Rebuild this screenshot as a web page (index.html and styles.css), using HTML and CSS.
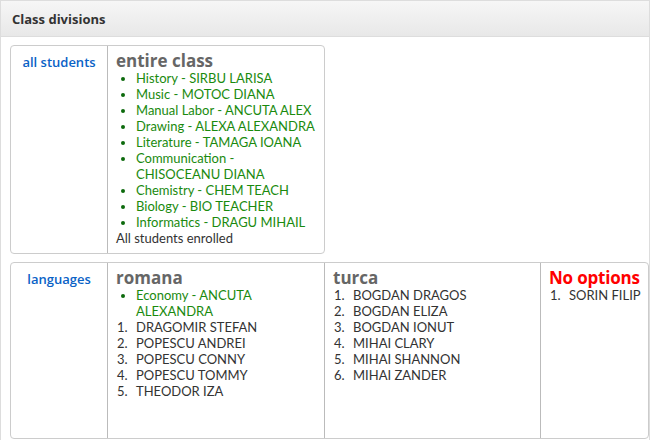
FILE: index.html
```html
<!DOCTYPE html>
<html lang="en">

<head>
    <meta charset="UTF-8">
    <title>Class divisions</title>
    <link rel="stylesheet" href="styles.css">
</head>

<body>
    <div class="panel">
        <div class="panel-heading">Class divisions</div>
        <div class="panel-body">

            <table class="division narrow">
                <tr>
                    <td class="division-name"><a href="#">all students</a></td>
                    <td class="group">
                        <h3>entire class</h3>
                        <ul class="courses">
                            <li>History - SIRBU LARISA</li>
                            <li>Music - MOTOC DIANA</li>
                            <li>Manual Labor - ANCUTA ALEX</li>
                            <li>Drawing - ALEXA ALEXANDRA</li>
                            <li>Literature - TAMAGA IOANA</li>
                            <li>Communication - CHISOCEANU DIANA</li>
                            <li>Chemistry - CHEM TEACH</li>
                            <li>Biology - BIO TEACHER</li>
                            <li>Informatics - DRAGU MIHAIL</li>
                        </ul>
                        <div>All students enrolled</div>
                    </td>
                </tr>
            </table>

            <table class="division wide">
                <tr>
                    <td class="division-name"><a href="#">languages</a></td>
                    <td class="group col-romana">
                        <h3>romana</h3>
                        <ul class="courses">
                            <li>Economy - ANCUTA ALEXANDRA</li>
                        </ul>
                        <ol class="students">
                            <li>DRAGOMIR STEFAN</li>
                            <li>POPESCU ANDREI</li>
                            <li>POPESCU CONNY</li>
                            <li>POPESCU TOMMY</li>
                            <li>THEODOR IZA</li>
                        </ol>
                    </td>
                    <td class="group col-turca">
                        <h3>turca</h3>
                        <ol class="students">
                            <li>BOGDAN DRAGOS</li>
                            <li>BOGDAN ELIZA</li>
                            <li>BOGDAN IONUT</li>
                            <li>MIHAI CLARY</li>
                            <li>MIHAI SHANNON</li>
                            <li>MIHAI ZANDER</li>
                        </ol>
                    </td>
                    <td class="group col-none">
                        <h3 class="none">No options</h3>
                        <ol class="students">
                            <li>SORIN FILIP</li>
                        </ol>
                    </td>
                </tr>
            </table>

        </div>
    </div>
</body>

</html>
```

FILE: styles.css
```css
* {
    box-sizing: border-box;
}

html,
body {
    margin: 0;
    padding: 0;
    background-color: #fff;
    font-family: Lato, 'Open Sans', sans-serif;
    font-size: 13px;
    color: #333;
}

.panel {
    border: 1px solid #ddd;
    border-bottom: none;
    width: 650px;
    min-height: 440px;
}

.panel-heading {
    height: 36px;
    padding: 9px 11px;
    font-family: 'Open Sans', sans-serif;
    font-weight: bold;
    font-size: 13px;
    color: #333;
    background: linear-gradient(#f6f6f6, #e8e8e8);
    border-bottom: 1px solid #ddd;
}

.panel-body {
    padding: 8px 0 0 9px;
}

.division {
    border-collapse: separate;
    border-spacing: 0;
    border: 1px solid #ccc;
    border-radius: 4px;
    margin-bottom: 8px;
}

.division.narrow {
    width: 315px;
}

.division.wide {
    width: 639px;
}

.division td {
    vertical-align: top;
    line-height: 16px;
}

.division-name {
    width: 97px;
    padding: 8px 4px;
    text-align: center;
    border-right: 1px solid #bbb;
}

.division-name a {
    font-family: 'Open Sans', sans-serif;
    font-weight: 600;
    color: #0a62c6;
    text-decoration: none;
}

.group {
    padding: 5px 6px 7px 8px;
}

.col-romana {
    width: 217px;
    border-right: 1px solid #bbb;
}

.col-turca {
    width: 216px;
    border-right: 1px solid #bbb;
}

.col-none {
    white-space: nowrap;
}

.wide td {
    height: 175px;
}

h3 {
    margin: 0;
    font-family: 'Open Sans', sans-serif;
    font-size: 17px;
    line-height: 19px;
    color: #666;
}

h3.none {
    color: #f00;
    letter-spacing: -0.2px;
}

.courses {
    margin: 0;
    padding-left: 20px;
    color: #1a8a0e;
}

.courses li::marker {
    color: #0c6a0c;
}

.students {
    margin: 0;
    padding-left: 15px;
}

.students li {
    padding-left: 5px;
}
```
